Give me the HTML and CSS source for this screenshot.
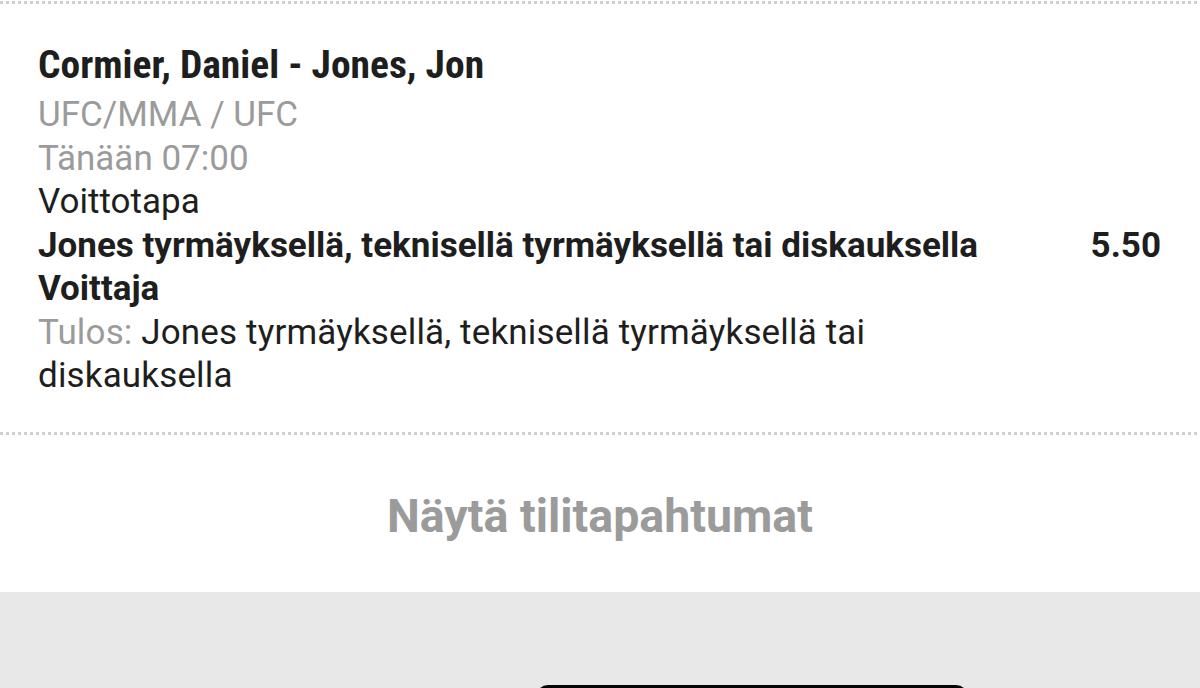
FILE: index.html
```html
<!DOCTYPE html>
<html lang="fi">
<head>
<meta charset="utf-8">
<title>Vedon tiedot</title>
<link rel="stylesheet" href="styles.css">
</head>
<body>
<div class="page">
  <div class="dots dots-top"></div>
  <section class="card">
    <div class="title">Cormier, Daniel - Jones, Jon</div>
    <div class="muted">UFC/MMA / UFC</div>
    <div class="muted">Tänään 07:00</div>
    <div class="line">Voittotapa</div>
    <div class="row">
      <span class="strong">Jones tyrmäyksellä, teknisellä tyrmäyksellä tai diskauksella</span>
      <span class="strong odds">5.50</span>
    </div>
    <div class="strong">Voittaja</div>
    <div class="line result"><span class="label">Tulos:</span> Jones tyrmäyksellä, teknisellä tyrmäyksellä tai diskauksella</div>
  </section>
  <div class="dots"></div>
  <div class="action">Näytä tilitapahtumat</div>
  <footer class="footer">
    <div class="bar"></div>
  </footer>
</div>
</body>
</html>
```
FILE: styles.css
```css
html, body {
  margin: 0;
  padding: 0;
  background: #ffffff;
}
body {
  font-family: Roboto, "Noto Sans", sans-serif;
  color: #1e1e1e;
  overflow: hidden;
}
.page {
  width: 1200px;
  height: 688px;
  display: flex;
  flex-direction: column;
}
.dots {
  height: 3px;
  flex: none;
  background: repeating-linear-gradient(90deg, #cfcfcf 0 3px, transparent 3px 6px);
}
.dots-top {
  margin-top: 1px;
}
.card {
  flex: none;
  padding: 32px 39px 34px 38px;
  font-size: 35px;
  line-height: 43.5px;
}
.title {
  font-family: "Roboto Condensed", Roboto, sans-serif;
  font-stretch: condensed;
  font-weight: 700;
  font-size: 39.5px;
  line-height: 57px;
  color: #1e1e1e;
}
.muted, .label {
  color: #9b9b9b;
}
.strong {
  font-weight: 700;
}
.row {
  display: flex;
  justify-content: space-between;
}
.result {
  width: 880px;
  letter-spacing: 0.15px;
}
.action {
  flex: none;
  height: 151px;
  padding-top: 6px;
  line-height: 151px;
  text-align: center;
  font-size: 46.5px;
  font-weight: 700;
  color: #9b9b9b;
}
.footer {
  flex: 1;
  background: #e8e8e8;
  overflow: hidden;
  display: flex;
  justify-content: flex-start;
  padding-top: 93px;
  padding-left: 536px;
}
.bar {
  width: 432px;
  height: 24px;
  flex: none;
  background: #050505;
  border-radius: 14px;
}
```
